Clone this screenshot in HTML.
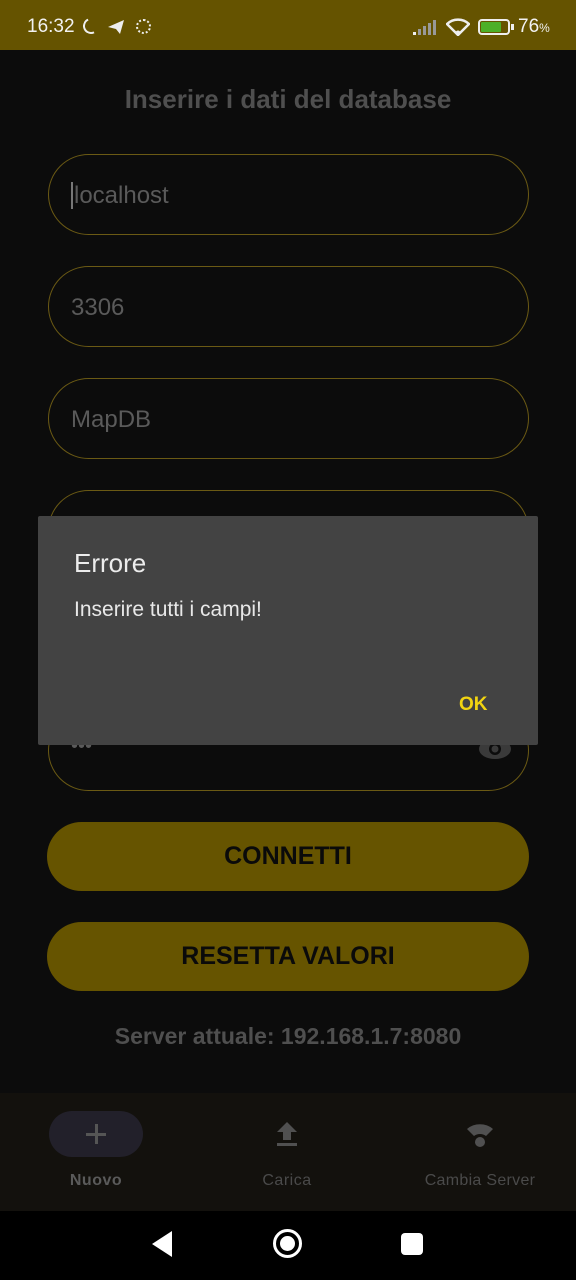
<!DOCTYPE html>
<html><head><meta charset="utf-8"><style>
*{margin:0;padding:0;box-sizing:border-box}
body{width:576px;height:1280px;background:#0c0c0c;font-family:"Liberation Sans",sans-serif;position:relative;overflow:hidden}
.sb{position:absolute;left:0;top:0;width:576px;height:50px;background:#655300;color:#f2f2f2}
.title{position:absolute;top:84px;width:576px;text-align:center;color:#4f4f4f;font-size:26px;font-weight:bold}
.f{position:absolute;left:48px;width:481px;height:81px;border:1.5px solid #6b5a14;border-radius:41px;color:#5a5a5a;font-size:24px;padding:27px 0 0 22px}
.btn{position:absolute;left:47px;width:482px;height:69px;background:#665400;border-radius:35px;text-align:center;line-height:69px;font-size:25px;font-weight:bold;color:#0a0a0a}
.srv{position:absolute;top:1023px;width:576px;text-align:center;color:#4f4f4f;font-size:23px;font-weight:bold}
.nav{position:absolute;top:1093px;left:0;width:576px;height:118px;background:#13110d}
.lbl{position:absolute;top:1172px;font-size:16px;color:#4a4a4a;text-align:center;letter-spacing:.5px}
.sys{position:absolute;top:1211px;left:0;width:576px;height:69px;background:#000}
.dlg{position:absolute;left:38px;top:516px;width:500px;height:229px;background:#434343;border-radius:2px}
</style></head><body>
<div class="sb">
<div style="position:absolute;left:27px;top:16px;font-size:19px">16:32</div>
<div style="position:absolute;left:83px;top:18px;width:16px;height:16px;border-radius:50%;border:2.5px solid #eee;border-right-color:transparent;border-top-color:transparent;transform:rotate(20deg)"></div>
<svg style="position:absolute;left:107px;top:19px" width="18" height="16"><path d="M1 8 L17 1 L13 15 L9 10 Z" fill="#eee"/></svg>
<div style="position:absolute;left:136px;top:19px;width:15px;height:15px;border-radius:50%;border:2.5px dotted #eee"></div>
<svg style="position:absolute;left:412px;top:20px" width="26" height="16"><rect x="1" y="12" width="3" height="3" fill="#eee"/><rect x="6" y="9" width="3" height="6" fill="#999"/><rect x="11" y="6" width="3" height="9" fill="#999"/><rect x="16" y="3" width="3" height="12" fill="#999"/><rect x="21" y="0" width="3" height="15" fill="#999"/></svg>
<svg style="position:absolute;left:446px;top:18px" width="24" height="18"><path d="M12 17 L1 6 A16 16 0 0 1 23 6 Z" fill="none" stroke="#eee" stroke-width="2.5"/><circle cx="12" cy="15" r="2.5" fill="#eee"/></svg>
<div style="position:absolute;left:478px;top:19px;width:32px;height:16px;border:2px solid #eee;border-radius:4px;padding:1px"><div style="width:20px;height:10px;background:#4caf28;border-radius:1px"></div></div>
<div style="position:absolute;left:511px;top:24px;width:3px;height:6px;background:#eee"></div>
<div style="position:absolute;left:518px;top:16px;font-size:19px">76<span style="font-size:12px">%</span></div>
</div>
<div class="title">Inserire i dati del database</div>
<div class="f" style="top:154px"><span style="border-left:2px solid #777;padding-left:1px">localhost</span></div>
<div class="f" style="top:266px">3306</div>
<div class="f" style="top:378px">MapDB</div>
<div class="f" style="top:490px"></div>
<div class="f" style="top:710px;padding-top:24px;font-size:20px">•••
<svg style="position:absolute;right:16px;top:26px" width="34" height="24"><ellipse cx="17" cy="12" rx="16" ry="10" fill="#3a3a3a"/><circle cx="17" cy="12" r="6" fill="#0c0c0c"/><circle cx="17" cy="12" r="3.5" fill="#3a3a3a"/></svg></div>
<div class="btn" style="top:822px">CONNETTI</div>
<div class="btn" style="top:922px">RESETTA VALORI</div>
<div class="srv">Server attuale: 192.168.1.7:8080</div>
<div class="nav"></div>
<div style="position:absolute;left:49px;top:1111px;width:94px;height:46px;border-radius:23px;background:#22202a"></div>
<div style="position:absolute;left:86px;top:1133px;width:20px;height:2.5px;background:#555"></div>
<div style="position:absolute;left:95px;top:1124px;width:2.5px;height:20px;background:#555"></div>
<svg style="position:absolute;left:275px;top:1121px" width="24" height="26"><path d="M12 1 L22 11 L16 11 L16 19 L8 19 L8 11 L2 11 Z" fill="#505050"/><rect x="2" y="22" width="20" height="3" fill="#505050"/></svg>
<svg style="position:absolute;left:465px;top:1121px" width="30" height="28"><path d="M2 8 A20 20 0 0 1 28 8 L21 15 A10 10 0 0 0 9 15 Z" fill="#505050"/><circle cx="15" cy="21" r="5" fill="#505050"/></svg>
<div class="lbl" style="left:46px;width:100px;font-weight:bold;color:#5a5a5a">Nuovo</div>
<div class="lbl" style="left:237px;width:100px">Carica</div>
<div class="lbl" style="left:400px;width:160px;letter-spacing:.3px">Cambia Server</div>
<div class="sys"></div>
<svg style="position:absolute;left:150px;top:1230px" width="24" height="28"><path d="M22 1 L22 27 L2 14 Z" fill="#fff"/></svg>
<div style="position:absolute;left:273px;top:1229px;width:29px;height:29px;border:3px solid #fff;border-radius:50%"><div style="position:absolute;left:4px;top:4px;width:15px;height:15px;background:#fff;border-radius:50%"></div></div>
<div style="position:absolute;left:401px;top:1233px;width:22px;height:22px;background:#fff;border-radius:4px"></div>
<div class="dlg">
<div style="position:absolute;left:36px;top:32px;color:#ececec;font-size:26px">Errore</div>
<div style="position:absolute;left:36px;top:82px;color:#e8e8e8;font-size:21px">Inserire tutti i campi!</div>
<div style="position:absolute;left:421px;top:178px;color:#f2d411;font-size:19px;font-weight:bold">OK</div>
</div>
</body></html>
